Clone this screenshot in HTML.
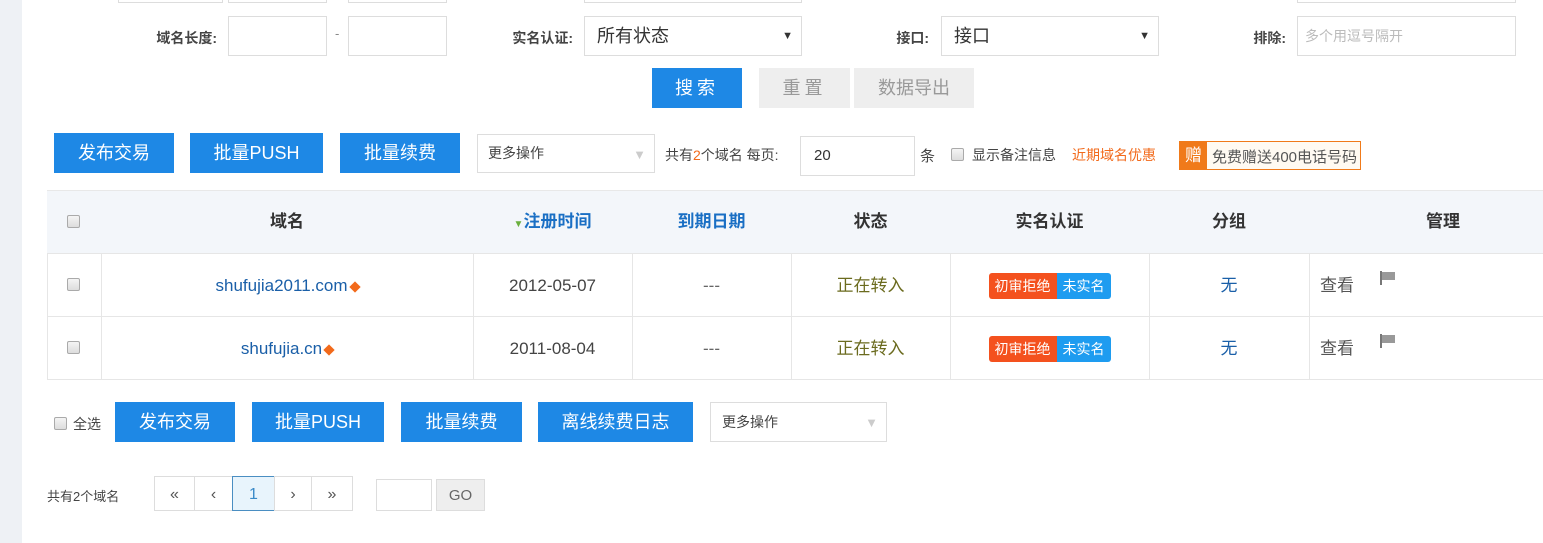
<!DOCTYPE html>
<html><head><meta charset="utf-8"><style>
body{margin:0;width:1543px;height:543px;background:#fff;position:relative;overflow:hidden;font-family:"Liberation Sans","Noto Sans CJK SC",sans-serif;color:#333}
.a{position:absolute}
.side{left:0;top:0;width:22px;height:543px;background:#eef1f5}
.in{position:absolute;border:1px solid #ddd;background:#fff;box-sizing:border-box}
.lbl{position:absolute;font-size:14px;font-weight:bold;color:#444;text-align:right}
.btn{position:absolute;background:#1e88e5;color:#fff;font-size:18px;text-align:center;box-sizing:border-box}
.gbtn{position:absolute;background:#eee;color:#999;font-size:18px;text-align:center}
.sel{font-size:18px;color:#333;padding-left:12px;line-height:38px}
.arr{position:absolute;right:8px;top:0;font-size:11px}
.th{position:absolute;font-size:17px;font-weight:bold;text-align:center;top:190px;height:62px;line-height:64px}
.vl{position:absolute;width:1px;background:#e6e6e6;top:253px;height:126px}
.hl{position:absolute;height:1px;background:#e6e6e6;left:47px;width:1496px}
.cb{position:absolute;width:11px;height:11px;border:1px solid #aaa;border-radius:2px;background:linear-gradient(#f4f4f4,#ddd)}
.td{position:absolute;text-align:center;font-size:17px;height:62px;line-height:64px}
.tag{display:inline-block;font-size:14px;color:#fff;line-height:26px;padding:0 6px;vertical-align:middle}
.dia{display:inline-block;width:8px;height:8px;background:#f26a1b;transform:rotate(45deg);margin-left:3px;vertical-align:middle}
.pg{position:absolute;top:476px;height:35px;border:1px solid #ddd;box-sizing:border-box;text-align:center;line-height:36px;font-size:16px;color:#555}
</style></head><body>
<div class="a side"></div>
<div class="in" style="left:118px;top:-36px;width:105px;height:39px"></div>
<div class="in" style="left:228px;top:-36px;width:99px;height:39px"></div>
<div class="in" style="left:348px;top:-36px;width:99px;height:39px"></div>
<div class="in" style="left:584px;top:-36px;width:218px;height:39px"></div>
<div class="in" style="left:1297px;top:-36px;width:219px;height:39px"></div>
<div class="lbl" style="left:100px;top:28px;width:117px">域名长度:</div>
<div class="in" style="left:228px;top:16px;width:99px;height:40px"></div>
<div class="a" style="left:335px;top:26px;font-size:13px;color:#888">-</div>
<div class="in" style="left:348px;top:16px;width:99px;height:40px"></div>
<div class="lbl" style="left:470px;top:28px;width:103px">实名认证:</div>
<div class="in sel" style="left:584px;top:16px;width:218px;height:40px">所有状态<span class="arr">▼</span></div>
<div class="lbl" style="left:860px;top:28px;width:69px">接口:</div>
<div class="in sel" style="left:941px;top:16px;width:218px;height:40px">接口<span class="arr">▼</span></div>
<div class="lbl" style="left:1200px;top:28px;width:86px">排除:</div>
<div class="in" style="left:1297px;top:16px;width:219px;height:40px;font-size:14px;color:#bbb;padding-left:7px;line-height:38px">多个用逗号隔开</div>
<div class="btn" style="left:652px;top:68px;width:90px;height:40px;line-height:40px;letter-spacing:4px">搜索</div>
<div class="gbtn" style="left:759px;top:68px;width:91px;height:40px;line-height:40px;letter-spacing:4px">重置</div>
<div class="gbtn" style="left:854px;top:68px;width:120px;height:40px;line-height:40px">数据导出</div>
<div class="btn" style="left:54px;top:133px;width:120px;height:40px;line-height:40px">发布交易</div>
<div class="btn" style="left:190px;top:133px;width:133px;height:40px;line-height:40px">批量PUSH</div>
<div class="btn" style="left:340px;top:133px;width:120px;height:40px;line-height:40px">批量续费</div>
<div class="in" style="left:477px;top:134px;width:178px;height:39px;font-size:14px;padding-left:10px;line-height:37px;color:#444">更多操作<span class="arr" style="color:#ccc;font-size:13px;top:1px">▼</span></div>
<div class="a" style="left:665px;top:145px;font-size:14px;color:#444">共有<span style="color:#f26a1b">2</span>个域名 每页:</div>
<div class="in" style="left:800px;top:136px;width:115px;height:40px;font-size:15px;padding-left:13px;line-height:38px">20</div>
<div class="a" style="left:920px;top:145px;font-size:15px;color:#444">条</div>
<div class="cb" style="left:951px;top:148px"></div>
<div class="a" style="left:972px;top:145px;font-size:14px;color:#444">显示备注信息</div>
<div class="a" style="left:1072px;top:145px;font-size:14px;color:#f26a1b">近期域名优惠</div>
<div class="a" style="left:1179px;top:141px;width:182px;height:29px;border:1px solid #f07a1a;box-sizing:border-box;background:#fffaf2">
<div class="a" style="left:0;top:0;width:27px;height:27px;background:#f07a1a;color:#fff;font-size:17px;text-align:center;line-height:27px">赠</div>
<div class="a" style="left:32px;top:4px;font-size:15px;color:#555">免费赠送400电话号码</div></div>
<div class="a" style="left:47px;top:190px;width:1496px;height:63px;background:#f3f6fa;border-top:1px solid #e8e8e8"></div>
<div class="hl" style="top:253px"></div><div class="hl" style="top:316px"></div><div class="hl" style="top:379px"></div>
<div class="a" style="left:47px;top:253px;width:1px;height:127px;background:#e6e6e6"></div>
<div class="vl" style="left:101px"></div><div class="vl" style="left:473px"></div><div class="vl" style="left:632px"></div><div class="vl" style="left:791px"></div><div class="vl" style="left:950px"></div><div class="vl" style="left:1149px"></div><div class="vl" style="left:1309px"></div>
<div class="cb" style="left:67px;top:215px"></div>
<div class="th" style="left:101px;width:372px;color:#333">域名</div>
<div class="th" style="left:473px;width:159px;color:#1a6fc4"><span style="color:#6aaf3d;font-size:10px">▼</span>注册时间</div>
<div class="th" style="left:632px;width:159px;color:#1a6fc4">到期日期</div>
<div class="th" style="left:791px;width:159px;color:#333">状态</div>
<div class="th" style="left:950px;width:199px;color:#333">实名认证</div>
<div class="th" style="left:1149px;width:160px;color:#333">分组</div>
<div class="th" style="left:1309px;width:268px;color:#333">管理</div>
<div class="cb" style="left:67px;top:278px"></div>
<div class="td" style="left:101px;width:372px;top:254px;color:#1a5fa8">shufujia2011.com<span class="dia"></span></div>
<div class="td" style="left:473px;width:159px;top:254px;color:#444">2012-05-07</div>
<div class="td" style="left:632px;width:159px;top:254px;color:#666">---</div>
<div class="td" style="left:791px;width:159px;top:254px;color:#6b6b1f">正在转入</div>
<div class="td" style="left:950px;width:199px;top:253px"><span class="tag" style="background:#f4511e;border-radius:3px 0 0 3px">初审拒绝</span><span class="tag" style="background:#1e9cf0;border-radius:0 3px 3px 0">未实名</span></div>
<div class="td" style="left:1149px;width:160px;top:254px;color:#1a5fa8">无</div>
<div class="td" style="left:1320px;top:254px;color:#555">查看</div>
<div class="a" style="left:1380px;top:271px;width:2px;height:14px;background:#777"></div><div class="a" style="left:1382px;top:272px;width:13px;height:8px;background:#999"></div>
<div class="cb" style="left:67px;top:341px"></div>
<div class="td" style="left:101px;width:372px;top:317px;color:#1a5fa8">shufujia.cn<span class="dia"></span></div>
<div class="td" style="left:473px;width:159px;top:317px;color:#444">2011-08-04</div>
<div class="td" style="left:632px;width:159px;top:317px;color:#666">---</div>
<div class="td" style="left:791px;width:159px;top:317px;color:#6b6b1f">正在转入</div>
<div class="td" style="left:950px;width:199px;top:316px"><span class="tag" style="background:#f4511e;border-radius:3px 0 0 3px">初审拒绝</span><span class="tag" style="background:#1e9cf0;border-radius:0 3px 3px 0">未实名</span></div>
<div class="td" style="left:1149px;width:160px;top:317px;color:#1a5fa8">无</div>
<div class="td" style="left:1320px;top:317px;color:#555">查看</div>
<div class="a" style="left:1380px;top:334px;width:2px;height:14px;background:#777"></div><div class="a" style="left:1382px;top:335px;width:13px;height:8px;background:#999"></div>
<div class="cb" style="left:54px;top:417px"></div>
<div class="a" style="left:73px;top:414px;font-size:14px;color:#444">全选</div>
<div class="btn" style="left:115px;top:402px;width:120px;height:40px;line-height:40px">发布交易</div>
<div class="btn" style="left:252px;top:402px;width:132px;height:40px;line-height:40px">批量PUSH</div>
<div class="btn" style="left:401px;top:402px;width:121px;height:40px;line-height:40px">批量续费</div>
<div class="btn" style="left:538px;top:402px;width:155px;height:40px;line-height:40px">离线续费日志</div>
<div class="in" style="left:710px;top:402px;width:177px;height:40px;font-size:14px;padding-left:11px;line-height:38px;color:#444">更多操作<span class="arr" style="color:#ccc;font-size:13px;top:1px">▼</span></div>
<div class="a" style="left:47px;top:486px;font-size:13px;color:#444">共有2个域名</div>
<div class="pg" style="left:154px;width:41px">«</div>
<div class="pg" style="left:194px;width:39px">‹</div>
<div class="pg" style="left:232px;width:43px;background:#e8f4fc;border-color:#4a8ec2;color:#3a8ac8">1</div>
<div class="pg" style="left:274px;width:38px">›</div>
<div class="pg" style="left:311px;width:42px">»</div>
<div class="in" style="left:376px;top:479px;width:56px;height:32px"></div>
<div class="a" style="left:436px;top:479px;width:49px;height:32px;background:#eee;border:1px solid #ddd;box-sizing:border-box;text-align:center;line-height:32px;font-size:15px;color:#666">GO</div>
</body></html>
